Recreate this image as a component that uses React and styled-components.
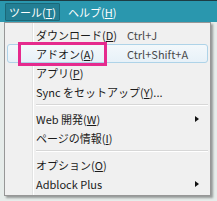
import React from "react";
import styled, { createGlobalStyle } from "styled-components";

const Global = createGlobalStyle`
  html, body { margin: 0; padding: 0; }
  body {
    width: 217px; height: 201px; overflow: hidden;
    background: #e4e9e6;
    font-family: "Noto Sans CJK JP", "Noto Sans", sans-serif;
  }
`;

const Page = styled.div`
  position: relative;
  width: 217px;
  height: 201px;
  display: flex;
  flex-direction: column;
`;

const Bar = styled.div`
  height: 21px;
  background: #2a97ae;
  border-top: 1px solid #1d3c44;
  display: flex;
  align-items: center;
  padding-left: 5px;
  gap: 4px;
`;

const BarItem = styled.div`
  height: 16px;
  display: flex;
  align-items: center;
  padding: 0 3px;
  color: #ffffff;
  font-size: 11px;
  border: 1px solid ${(p) => (p.$active ? "#1b6878" : "transparent")};
  background: ${(p) => (p.$active ? "#237f94" : "transparent")};
  border-radius: 1px;
`;

const Below = styled.div`
  flex: 1;
  background: #e6ecea;
`;

const Menu = styled.div`
  position: absolute;
  left: 4px;
  top: 22px;
  width: 205px;
  padding: 2px 0 2px;
  background: #f0f0f0;
  border: 1px solid #979797;
  box-shadow: 2px 2px 2px rgba(0, 0, 0, 0.35);
  display: flex;
  flex-direction: column;
`;

const Gutter = styled.div`
  position: absolute;
  left: 27px;
  top: 0;
  bottom: 0;
  width: 1px;
  background: #e2e3e3;
  border-right: 1px solid #ffffff;
`;

const Row = styled.div`
  position: relative;
  height: 19px;
  display: flex;
  align-items: center;
  font-size: 11px;
  color: #1b1b1b;
  margin: 0 2px;
  border: 1px solid ${(p) => (p.$hover ? "#aed3e8" : "transparent")};
  border-radius: 3px;
  background: ${(p) =>
    p.$hover ? "linear-gradient(#f3f8fb, #e7f1f8)" : "transparent"};
  box-sizing: border-box;
`;

const Label = styled.span`
  padding-left: 28px;
  width: 91px;
  white-space: nowrap;
`;

const Shortcut = styled.span`
  color: #4a4a4a;
  white-space: nowrap;
`;

const Arrow = styled.span`
  position: absolute;
  right: 8px;
  top: 6px;
  width: 0;
  height: 0;
  border-top: 3.5px solid transparent;
  border-bottom: 3.5px solid transparent;
  border-left: 4px solid #111;
`;

const Sep = styled.div`
  height: 8px;
  display: flex;
  align-items: center;
  padding-left: 31px;
  padding-right: 2px;
  &::after {
    content: "";
    flex: 1;
    height: 1px;
    background: #d7d7d7;
    border-bottom: 1px solid #fff;
  }
`;

const U = styled.span`
  text-decoration: underline;
`;

const Mark = styled.div`
  position: absolute;
  left: 18px;
  top: 42px;
  width: 83px;
  height: 18px;
  border: 3px solid #e52b8e;
  pointer-events: none;
`;

export default function App() {
  return (
    <Page>
      <Global />
      <Bar>
        <BarItem $active>
          ツール(<U>T</U>)
        </BarItem>
        <BarItem>
          ヘルプ(<U>H</U>)
        </BarItem>
      </Bar>
      <Below />
      <Menu>
        <Gutter />
        <Row>
          <Label>
            ダウンロード(<U>D</U>)
          </Label>
          <Shortcut>Ctrl+J</Shortcut>
        </Row>
        <Row $hover>
          <Label>
            アドオン(<U>A</U>)
          </Label>
          <Shortcut>Ctrl+Shift+A</Shortcut>
        </Row>
        <Row>
          <Label>
            アプリ(<U>P</U>)
          </Label>
        </Row>
        <Row>
          <Label>
            Sync をセットアップ(<U>Y</U>)...
          </Label>
        </Row>
        <Sep />
        <Row>
          <Label>
            Web 開発(<U>W</U>)
          </Label>
          <Arrow />
        </Row>
        <Row>
          <Label>
            ページの情報(<U>I</U>)
          </Label>
        </Row>
        <Sep />
        <Row>
          <Label>
            オプション(<U>O</U>)
          </Label>
        </Row>
        <Row>
          <Label>Adblock Plus</Label>
          <Arrow />
        </Row>
      </Menu>
      <Mark />
    </Page>
  );
}
